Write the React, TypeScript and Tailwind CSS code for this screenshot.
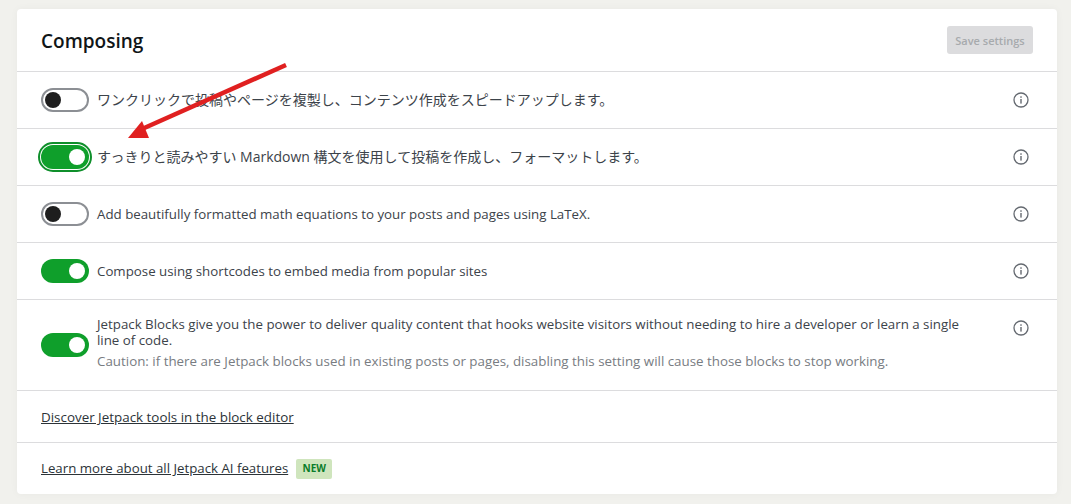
import React from "react";

const font = { fontFamily: '"Open Sans", "Noto Sans CJK JP", sans-serif' };

function Toggle({ on, focus }: { on: boolean; focus?: boolean }) {
  if (on) {
    return (
      <div className={`relative shrink-0 w-[48px] h-[24px] rounded-full bg-[#0f9f2b] flex items-center justify-end pr-[4px] ${focus ? "outline outline-2 outline-offset-1 outline-[#0f8f2b]" : ""}`}>
        <div className="w-[16px] h-[16px] rounded-full bg-white" />
      </div>
    );
  }
  return (
    <div className="shrink-0 w-[48px] h-[24px] rounded-full bg-white border-2 border-[#8c8f94] flex items-center pl-[2px]">
      <div className="w-[16px] h-[16px] rounded-full bg-[#1e1e1e]" />
    </div>
  );
}

function Info() {
  return (
    <svg width="16" height="16" viewBox="0 0 16 16" fill="none" className="shrink-0">
      <circle cx="8" cy="8" r="7" stroke="#646970" strokeWidth="1.3" />
      <rect x="7.3" y="7" width="1.4" height="4.6" fill="#646970" />
      <rect x="7.3" y="4.3" width="1.4" height="1.5" fill="#646970" />
    </svg>
  );
}

function Row({ on, focus, text, jp }: { on: boolean; focus?: boolean; text: string; jp?: boolean }) {
  return (
    <div className="h-[57px] border-b border-[#dcdcde] flex items-center pl-[24px] pr-[28px]">
      <Toggle on={on} focus={focus} />
      <span className={`flex-1 text-[#3c434a] ${jp ? "ml-[8px] text-[14px] mt-[-2px]" : "ml-[8px] text-[13.3px] pt-[1px]"}`}>{text}</span>
      <Info />
    </div>
  );
}

export default function App() {
  return (
    <div className="w-[1071px] h-[504px] bg-[#f1f1ed] pt-[9px] pl-[17px] overflow-hidden relative" style={font}>
      <div className="w-[1040px] h-[485px] bg-white rounded-[4px] flex flex-col shadow-[0_0_8px_rgba(0,0,0,0.04)]">
        <div className="h-[63px] border-b border-[#dcdcde] flex items-center justify-between pl-[24px] pr-[24px]">
          <h1 className="text-[19px] font-semibold text-[#101517] pt-[2px]">Composing</h1>
          <div className="w-[86px] h-[28px] rounded-[3px] bg-[#dcdcde] text-[#a7aaad] text-[11px] font-semibold flex items-center justify-center pt-[2px]">
            Save settings
          </div>
        </div>
        <Row jp on={false} text="ワンクリックで投稿やページを複製し、コンテンツ作成をスピードアップします。" />
        <Row jp on focus text="すっきりと読みやすい Markdown 構文を使用して投稿を作成し、フォーマットします。" />
        <Row on={false} text="Add beautifully formatted math equations to your posts and pages using LaTeX." />
        <Row on text="Compose using shortcodes to embed media from popular sites" />
        <div className="h-[91px] border-b border-[#dcdcde] flex pl-[24px] pr-[28px]">
          <div className="self-center"><Toggle on /></div>
          <div className="ml-[8px] flex-1 pt-[16px]">
            <p className="text-[13.3px] leading-[16px] text-[#3c434a] w-[870px]">
              Jetpack Blocks give you the power to deliver quality content that hooks website visitors without needing to hire a developer or learn a single line of code.
            </p>
            <p className="text-[13.35px] leading-[16px] mt-[5px] text-[#787c82]">
              Caution: if there are Jetpack blocks used in existing posts or pages, disabling this setting will cause those blocks to stop working.
            </p>
          </div>
          <div className="pt-[20px]"><Info /></div>
        </div>
        <div className="h-[52px] border-b border-[#dcdcde] flex items-center pl-[24px]">
          <a className="text-[13.4px] text-[#2c3338] underline pt-[1px]">Discover Jetpack tools in the block editor</a>
        </div>
        <div className="flex-1 flex items-center pl-[24px] gap-[8px]">
          <a className="text-[13.25px] text-[#2c3338] underline pt-[1px]">Learn more about all Jetpack AI features</a>
          <span className="w-[36px] h-[20px] rounded-[2px] bg-[#cfe5bd] text-[#0a7d2a] text-[10px] font-bold flex items-center justify-center">NEW</span>
        </div>
      </div>
      <svg className="absolute left-0 top-0 pointer-events-none" width="1071" height="504" viewBox="0 0 1071 504">
        <line x1="286" y1="65" x2="142" y2="129" stroke="#e02020" strokeWidth="4.5" />
        <polygon points="128,138 142,121 149,138" fill="#e02020" />
      </svg>
    </div>
  );
}
